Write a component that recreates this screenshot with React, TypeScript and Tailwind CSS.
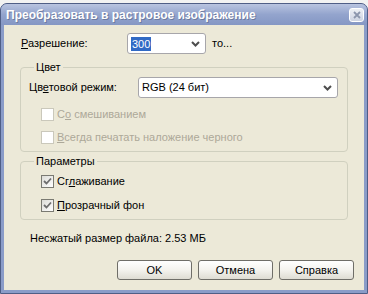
import type { ReactNode } from "react";

const font = { fontFamily: "'Liberation Sans', Arial, sans-serif" };

function Chevron() {
  return (
    <svg width="9" height="6" viewBox="0 0 9 6" className="block">
      <path d="M1 1 L4.5 4.5 L8 1" stroke="#4d4d4d" strokeWidth="2" fill="none" />
    </svg>
  );
}

function Combo({ width, children }: { width: string; children: ReactNode }) {
  return (
    <div
      className={`${width} h-[21px] flex items-center border border-[#a7a6aa] rounded-[3px] bg-white pl-[3px] pr-[5px]`}
    >
      <div className="flex-1 flex items-center">{children}</div>
      <Chevron />
    </div>
  );
}

function Check({
  checked,
  disabled,
  children,
}: {
  checked?: boolean;
  disabled?: boolean;
  children: ReactNode;
}) {
  return (
    <div className="flex items-center h-[13px] gap-[3px]">
      <div
        className={`w-[13px] h-[13px] flex items-center justify-center border ${
          disabled
            ? "border-[#cac8bb] bg-white"
            : "border-[#7a7a72] bg-gradient-to-br from-[#dcdcd7] to-white"
        }`}
      >
        {checked && (
          <svg width="9" height="9" viewBox="0 0 9 9" className="block">
            <path d="M1 4 L3.5 6.5 L8 1.5" stroke="#6e6e6e" strokeWidth="1.8" fill="none" />
          </svg>
        )}
      </div>
      <span className={disabled ? "text-[#aca899]" : "text-black"}>{children}</span>
    </div>
  );
}

function Group({ title, children, className }: { title: string; children: ReactNode; className: string }) {
  return (
    <fieldset className={`border border-[#d0d0bf] rounded-[4px] pl-[8px] pr-[9px] ${className}`}>
      <legend className="ml-[5px] px-[2px] leading-[13px]">{title}</legend>
      {children}
    </fieldset>
  );
}

function Button({ children }: { children: ReactNode }) {
  return (
    <button className="w-[75px] h-[20px] flex items-center justify-center rounded-[3px] border border-[#6f6e68] bg-gradient-to-b from-white via-[#f4f3ee] to-[#dedcd3] text-black font-normal">
      {children}
    </button>
  );
}

export default function App() {
  return (
    <div className="w-[368px] h-[294px] bg-[#f2f2f2] pt-[3px] text-[11px] text-black" style={font}>
      <div className="h-[291px] flex flex-col rounded-t-[7px] border border-[#4f5e86] bg-[#8a9cc8]">
        <div className="h-[21px] flex items-center justify-between pl-[5px] pr-[3px] rounded-t-[6px] bg-gradient-to-b from-[#b9c4e0] via-[#93a4cd] to-[#8597c4]">
          <span className="text-white font-bold text-[12px] [text-shadow:1px_1px_0_#6d7ba0]">
            Преобразовать в растровое изображение
          </span>
          <div className="w-[15px] h-[14px] flex items-center justify-center rounded-[3px] border border-white bg-gradient-to-b from-[#eef0f5] to-[#cdd3e2]">
            <svg width="8" height="8" viewBox="0 0 8 8" className="block">
              <path d="M1 1 L7 7 M7 1 L1 7" stroke="#8c96ad" strokeWidth="1.8" />
            </svg>
          </div>
        </div>
        <div className="flex-1 mx-[3px] mb-[3px] bg-[#ece9d8] flex flex-col px-4 pt-[8px]">
          <div className="flex items-center h-[21px]">
            <span className="w-[107px] pl-[1px]">
              <u>Р</u>азрешение:
            </span>
            <Combo width="w-[79px]">
              <span className="bg-[#316ac5] text-white px-[1px] leading-[14px]">300</span>
            </Combo>
            <span className="ml-[6px]">то...</span>
          </div>

          <Group title="Цвет" className="mt-[7px] h-[91px]">
            <div className="flex items-center h-[21px] mt-[3px]">
              <span className="w-[109px]">
                Цв<u>е</u>товой режим:
              </span>
              <Combo width="flex-1">
                <span>RGB (24 бит)</span>
              </Combo>
            </div>
            <div className="pl-[12px] mt-[10px] flex flex-col gap-[10px]">
              <Check disabled>
                С<u>о</u> смешиванием
              </Check>
              <Check disabled>
                <u>В</u>сегда печатать наложение черного
              </Check>
            </div>
          </Group>

          <Group title="Параметры" className="mt-[3px] h-[65px]">
            <div className="pl-[12px] mt-[7px] flex flex-col gap-[11px]">
              <Check checked>
                Сг<u>л</u>аживание
              </Check>
              <Check checked>
                <u>П</u>розрачный фон
              </Check>
            </div>
          </Group>

          <div className="mt-[12px] pl-[10px] h-[13px] leading-[13px]">Несжатый размер файла: 2.53 МБ</div>

          <div className="mt-[15px] flex justify-end gap-[6px] mr-[-6px]">
            <Button>OK</Button>
            <Button>Отмена</Button>
            <Button>Справка</Button>
          </div>
        </div>
      </div>
    </div>
  );
}
